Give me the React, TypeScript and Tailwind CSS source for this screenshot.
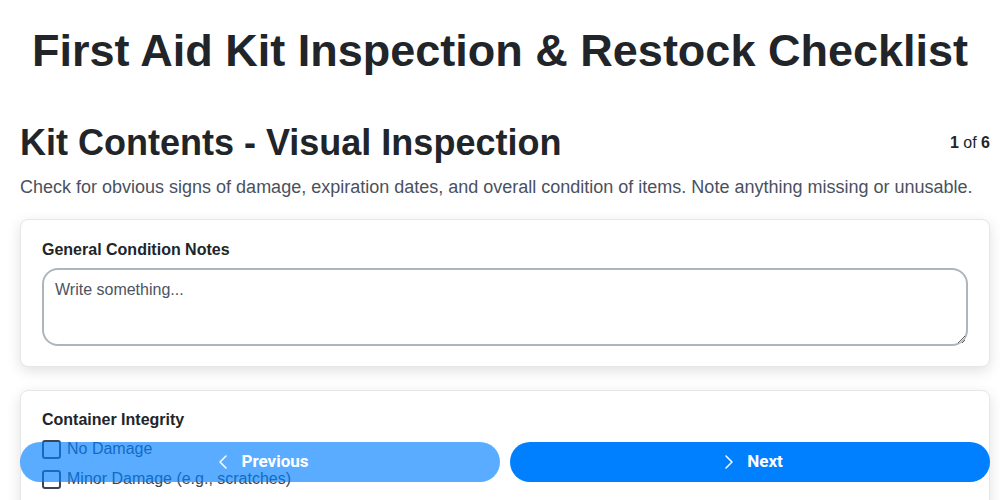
import { ChevronLeft, ChevronRight } from 'lucide-react';

const damageOptions = [
  'No Damage',
  'Minor Damage (e.g., scratches)',
  'Major Damage (e.g., cracks, broken latch)',
];

export default function App() {
  return (
    <div className="min-h-screen bg-white font-['Liberation_Sans',Arial,sans-serif] text-[#212529]">
      <h1 className="pt-[28px] text-center text-[45px] font-bold leading-none">
        First Aid Kit Inspection &amp; Restock Checklist
      </h1>

      <div className="pl-5 pr-[10px] pt-[52px] pb-24">
        <div className="flex items-center justify-between">
          <h2 className="text-[36px] font-bold leading-none">Kit Contents - Visual Inspection</h2>
          <span className="text-base">
            <b>1</b> of <b>6</b>
          </span>
        </div>
        <p className="mt-[14px] text-lg leading-6 text-[#4a5160]">
          Check for obvious signs of damage, expiration dates, and overall condition of items. Note anything missing or unusable.
        </p>

        <div className="mt-[20px] flex flex-col gap-[23px]">
          <div className="rounded-lg border border-[#e5e7eb] bg-white px-[21px] pt-[18px] pb-[20px] shadow-[0_4px_14px_rgba(0,0,0,0.12)]">
            <label className="mb-[6px] block text-base font-bold leading-6">General Condition Notes</label>
            <textarea
              placeholder="Write something..."
              className="block h-[78px] w-full rounded-2xl border-2 border-[#adb5bd] px-[11px] py-[8px] text-base leading-6 text-[#212529] placeholder:text-[#4b5563] outline-none"
            />
          </div>

          <div className="rounded-lg border border-[#e5e7eb] bg-white px-[21px] pt-[17px] pb-[21px] shadow-[0_4px_14px_rgba(0,0,0,0.12)]">
            <label className="block text-base font-bold leading-6">Container Integrity</label>
            <div className="mt-[2px] flex flex-col">
              {damageOptions.map((opt) => (
                <label key={opt} className="flex h-[30px] items-center gap-[6px] text-base text-[#3d4350]">
                  <span className="block h-[19px] w-[19px] rounded-[3px] border-2 border-[#3f4451]" />
                  {opt}
                </label>
              ))}
            </div>
          </div>
        </div>
      </div>

      <div className="fixed bottom-[18px] left-5 right-[10px] flex gap-[10px] font-['Roboto',sans-serif]">
        <button className="flex h-10 flex-1 items-center justify-center gap-[6px] rounded-full bg-[#0080ff] text-[17px] font-bold text-white opacity-65">
          <ChevronLeft size={24} strokeWidth={1.5} />
          Previous
        </button>
        <button className="flex h-10 flex-1 items-center justify-center gap-[6px] rounded-full bg-[#0080ff] text-[17px] font-bold text-white">
          <ChevronRight size={24} strokeWidth={1.5} />
          Next
        </button>
      </div>
    </div>
  );
}
